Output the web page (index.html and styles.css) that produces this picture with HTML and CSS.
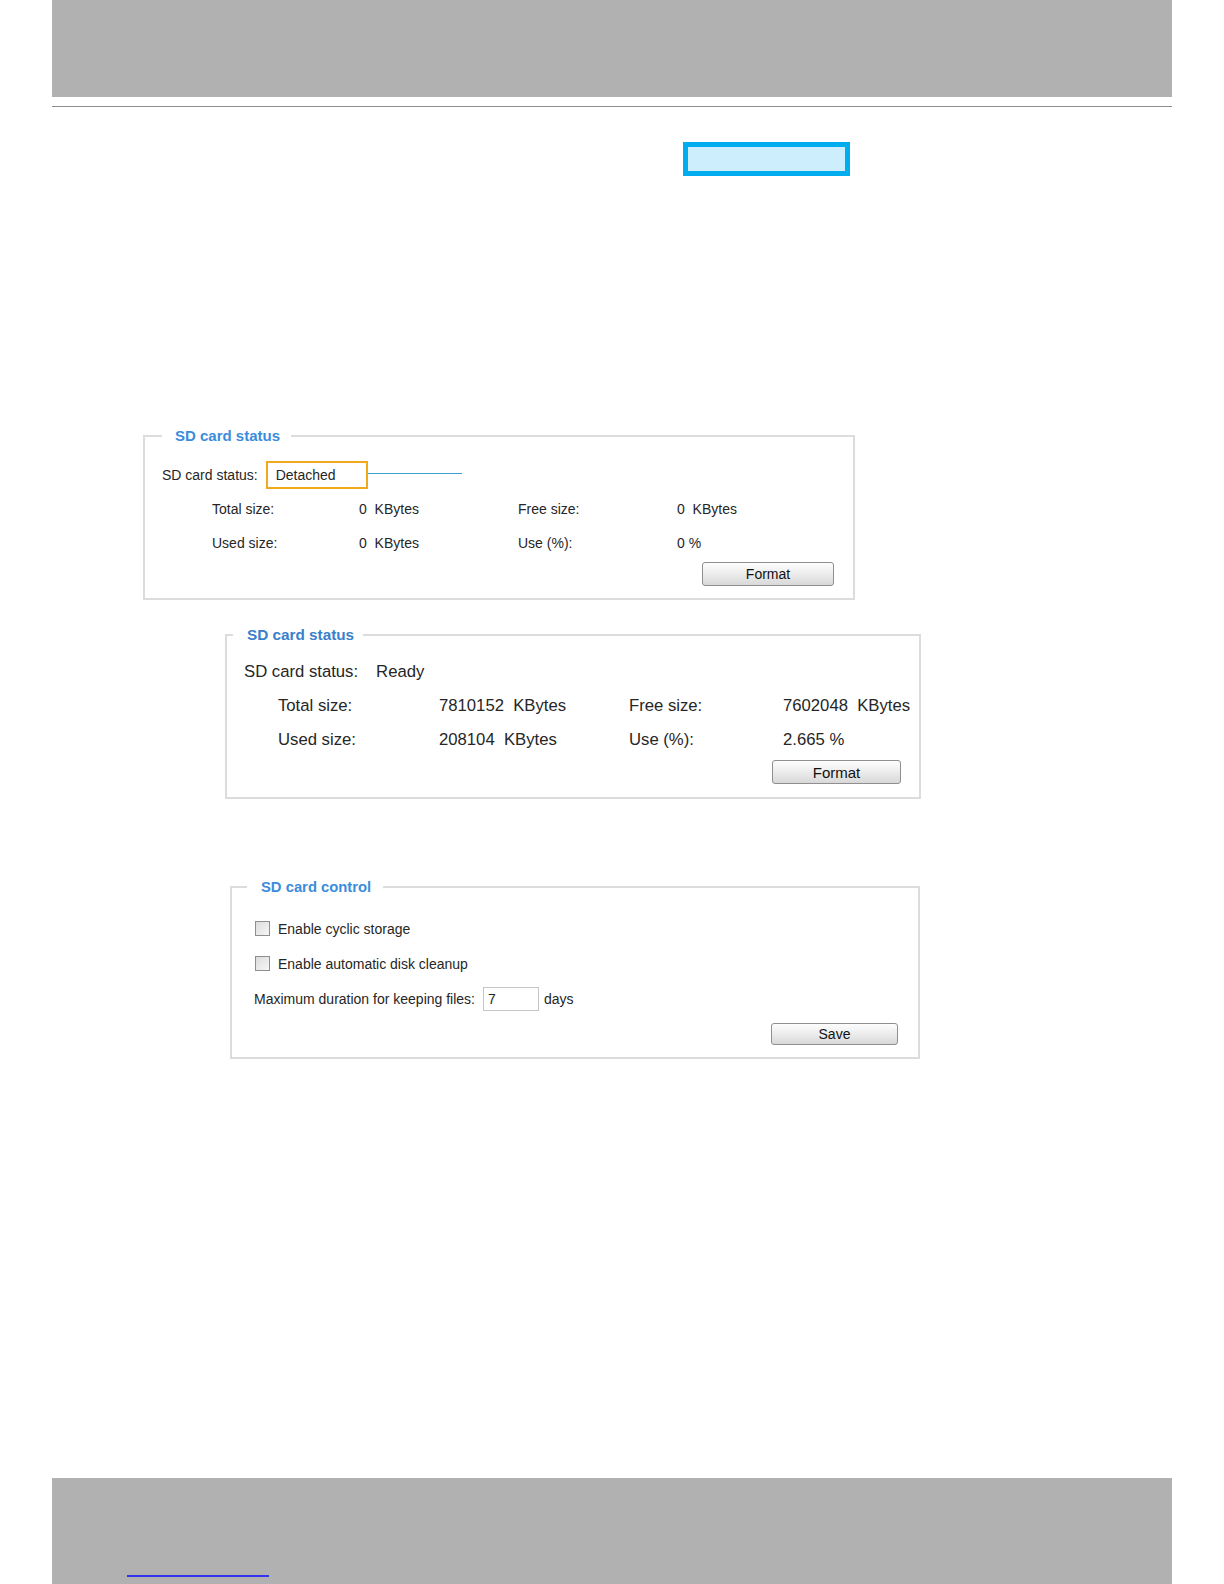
FILE: index.html
```html
<!DOCTYPE html>
<html lang="en">
<head>
  <meta charset="UTF-8" />
  <title>SD Card Management</title>
  <link rel="stylesheet" href="styles.css">
</head>
<body>
  <div class="page">
    <header class="top-bar"></header>
    <div class="top-rule"></div>
    <div class="highlight-box"></div>

    <fieldset class="panel panel-detached">
      <legend>SD card status</legend>
      <div class="status-row">
        <span>SD card status:</span>
        <span class="status-value">Detached</span>
        <span class="callout-line"></span>
      </div>
      <div class="size-grid">
        <span>Total size:</span><span>0  KBytes</span><span>Free size:</span><span>0  KBytes</span>
        <span>Used size:</span><span>0  KBytes</span><span>Use (%):</span><span>0 %</span>
      </div>
      <div class="button-row"><button type="button">Format</button></div>
    </fieldset>

    <fieldset class="panel panel-ready">
      <legend>SD card status</legend>
      <div class="status-row">
        <span>SD card status:</span>
        <span>Ready</span>
      </div>
      <div class="size-grid">
        <span>Total size:</span><span>7810152  KBytes</span><span>Free size:</span><span>7602048  KBytes</span>
        <span>Used size:</span><span>208104  KBytes</span><span>Use (%):</span><span>2.665 %</span>
      </div>
      <div class="button-row"><button type="button">Format</button></div>
    </fieldset>

    <fieldset class="panel panel-control">
      <legend>SD card control</legend>
      <label class="check-row"><input type="checkbox"> Enable cyclic storage</label>
      <label class="check-row"><input type="checkbox"> Enable automatic disk cleanup</label>
      <div class="duration-row">
        <span>Maximum duration for keeping files:</span>
        <input type="text" value="7">
        <span>days</span>
      </div>
      <div class="button-row"><button type="button">Save</button></div>
    </fieldset>

    <footer class="bottom-bar"><span class="footer-link"></span></footer>
  </div>
</body>
</html>
```

FILE: styles.css
```css
body {
  margin: 0;
  background-color: #fff;
  font-family: "Liberation Sans", Arial, sans-serif;
  color: #262626;
}
.page {
  width: 1120px;
  min-height: 1584px;
  margin: 0 auto;
  display: flex;
  flex-direction: column;
  align-items: flex-start;
}
.top-bar {
  width: 100%;
  height: 97px;
  background-color: #b1b1b1;
}
.top-rule {
  width: 100%;
  height: 1px;
  margin-top: 9px;
  background-color: #8d8d8d;
}
.highlight-box {
  width: 167px;
  height: 34px;
  margin: 35px 0 0 631px;
  box-sizing: border-box;
  border: 5px solid #00aeef;
  background-color: #cdeefc;
}

/* panels */
.panel {
  box-sizing: border-box;
  margin: 0;
  min-width: 0;
  border: 2px solid #dcdcdc;
}
.panel legend {
  font-weight: bold;
  line-height: 18px;
  color: #3b8ddb;
}
.status-row {
  display: flex;
  align-items: center;
}
.size-grid {
  display: grid;
  align-items: center;
  white-space: pre;
}
.button-row {
  display: flex;
  justify-content: flex-end;
}
button {
  font-family: "Liberation Sans", Arial, sans-serif;
  font-size: 14px;
  color: #111;
  padding: 0;
  border: 1px solid #8f8f8f;
  border-radius: 3px;
  background: linear-gradient(#fdfdfd, #ececec 50%, #d8d8d8);
  cursor: pointer;
}

.panel-detached {
  width: 712px;
  margin: 251px 0 0 91px;
  padding: 16px 19px 12px 17px;
  font-size: 14px;
}
.panel-detached legend {
  font-size: 15px;
  padding: 0 11px 0 13px;
}
.panel-detached .status-row {
  height: 28px;
  margin-bottom: 3px;
}
.status-value {
  box-sizing: border-box;
  width: 102px;
  height: 28px;
  margin-left: 8px;
  padding-left: 8px;
  line-height: 24px;
  border: 2px solid #f2a81d;
}
.callout-line {
  width: 94px;
  height: 1px;
  margin-top: -3px;
  background-color: #3d9fd6;
}
.panel-detached .size-grid {
  grid-template-columns: 147px 159px 159px auto;
  grid-auto-rows: 34px;
  margin-left: 50px;
}
.panel-detached button {
  width: 132px;
  height: 24px;
  margin-top: 2px;
}

.panel-ready {
  width: 696px;
  margin: 26px 0 0 173px;
  padding: 11px 18px 13px 17px;
  font-size: 16.7px;
}
.panel-ready legend {
  font-size: 15.3px;
  color: #3a7fca;
  margin-left: -11px;
  padding: 0 9px 0 14px;
}
.panel-ready .status-row {
  height: 34px;
  gap: 18px;
}
.panel-ready .size-grid {
  grid-template-columns: 161px 190px 154px auto;
  grid-auto-rows: 34px;
  margin-left: 34px;
}
.panel-ready button {
  width: 129px;
  height: 24px;
  margin-top: 3px;
  font-size: 15px;
}

.panel-control {
  width: 690px;
  margin: 79px 0 0 178px;
  padding: 15px 20px 12px 22px;
  font-size: 14px;
}
.panel-control legend {
  font-size: 14.8px;
  margin-left: -7px;
  padding: 0 12px 0 14px;
}
.check-row,
.duration-row {
  display: flex;
  align-items: center;
  height: 35px;
}
.check-row input {
  appearance: none;
  width: 15px;
  height: 15px;
  margin: 0 8px 0 1px;
  box-sizing: border-box;
  border: 1px solid #8e8e8e;
  background: linear-gradient(135deg, #dcdcdc, #f6f6f6);
}
.duration-row input {
  box-sizing: border-box;
  width: 56px;
  height: 24px;
  margin: 0 5px 0 8px;
  padding: 0 0 0 4px;
  border: 1px solid #c6c6c6;
  font-family: "Liberation Sans", Arial, sans-serif;
  font-size: 14px;
  color: #222;
}
.panel-control button {
  width: 127px;
  height: 22px;
  margin-top: 7px;
}

.bottom-bar {
  width: 100%;
  height: 106px;
  margin-top: auto;
  box-sizing: border-box;
  padding: 97px 0 0 75px;
  background-color: #b1b1b1;
}
.footer-link {
  display: block;
  width: 142px;
  height: 2px;
  background-color: #3434f0;
}
```
